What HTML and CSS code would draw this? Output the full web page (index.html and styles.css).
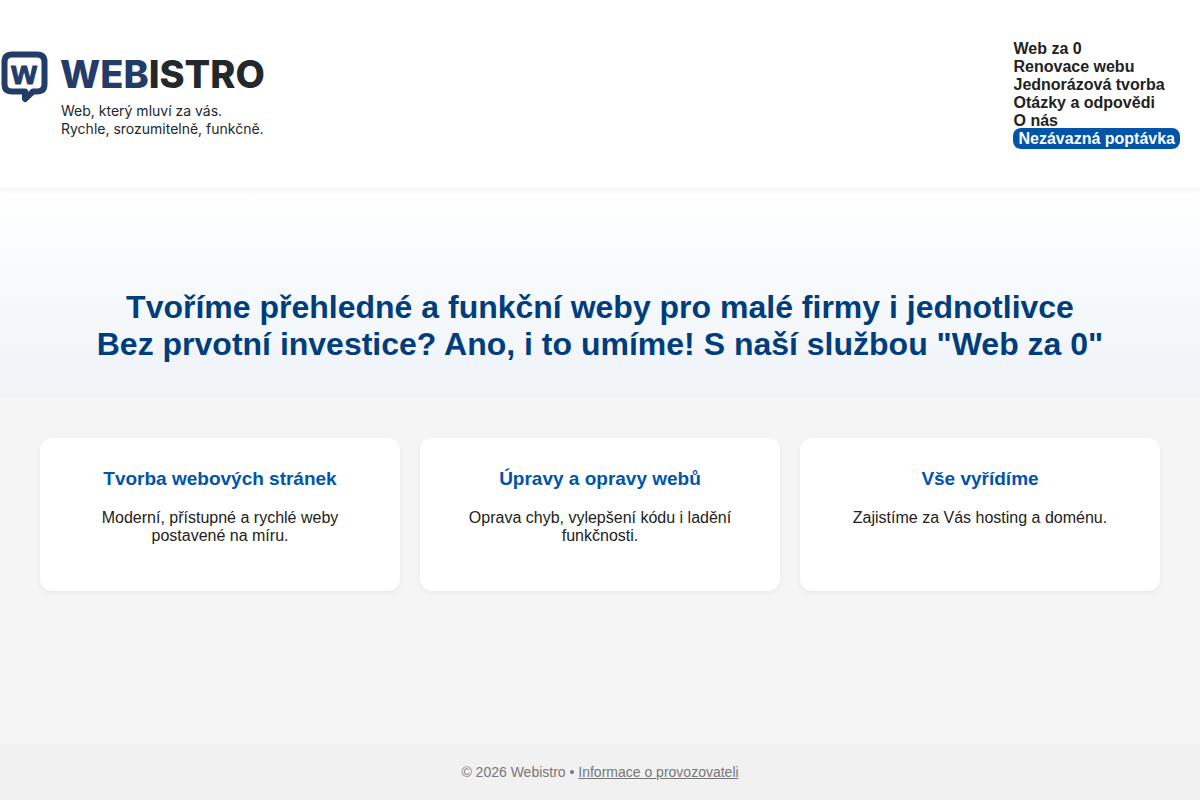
FILE: index.html
```html
<!DOCTYPE html>
<html lang="cs">
  <head>
    <meta charset="UTF-8" />
    <meta name="viewport" content="width=device-width, initial-scale=1.0" />
    <title>Webistro</title>
    <link rel="stylesheet" href="styles.css">
  </head>
  <body>
    <header>
      <a href="#" class="logo">
        <svg class="logo-mark" width="48" height="54" viewBox="0 0 48 54" aria-hidden="true">
          <path class="bubble" d="M12 4.500h25q7.500 0 7.500 7.500v22q0 7.500-7.500 7.500h-4l-8 7.500v-7.500H12q-7.500 0-7.500-7.500V12q0-7.500 7.500-7.500z" />
          <text class="letter" x="24" y="34" text-anchor="middle">w</text>
        </svg>
        <span class="logo-text">
          <span class="logo-name"><span class="logo-web">WEB</span>ISTRO</span>
          <span class="logo-claim">Web, který mluví za vás.<br />Rychle, srozumitelně, funkčně.</span>
        </span>
      </a>
      <nav>
        <ul>
          <li><a href="#">Web za 0</a></li>
          <li><a href="#">Renovace webu</a></li>
          <li><a href="#">Jednorázová tvorba</a></li>
          <li><a href="#">Otázky a odpovědi</a></li>
          <li><a href="#">O nás</a></li>
          <li><a href="#" class="cta">Nezávazná poptávka</a></li>
        </ul>
      </nav>
    </header>

    <section class="hero">
      <h1>
        Tvoříme přehledné a funkční weby pro malé firmy i jednotlivce<br />
        Bez prvotní investice? Ano, i to umíme! S naší službou "Web za 0"
      </h1>
    </section>

    <main class="services">
      <div class="card">
        <h2>Tvorba webových stránek</h2>
        <p>Moderní, přístupné a rychlé weby postavené na míru.</p>
      </div>
      <div class="card">
        <h2>Úpravy a opravy webů</h2>
        <p>Oprava chyb, vylepšení kódu i ladění funkčnosti.</p>
      </div>
      <div class="card">
        <h2>Vše vyřídíme</h2>
        <p>Zajistíme za Vás hosting a doménu.</p>
      </div>
    </main>

    <footer>
      © 2026 Webistro • <a href="#">Informace o provozovateli</a>
    </footer>
  </body>
</html>
```
FILE: styles.css
```css
* {
  box-sizing: border-box;
}
body {
  margin: 0;
  min-height: 100vh;
  display: flex;
  flex-direction: column;
  font-family: "Liberation Sans", Arial, sans-serif;
  font-size: 16px;
  line-height: 18px;
  color: #222;
  background: #f5f5f5;
}

/* header */
header {
  display: flex;
  justify-content: space-between;
  align-items: center;
  padding: 40px 20px 40px 0;
  background: #fff;
  box-shadow: 0 2px 5px rgba(0, 0, 0, 0.05);
  position: relative;
}
.logo {
  display: flex;
  gap: 12px;
  color: #22282c;
  text-decoration: none;
}
.bubble {
  fill: none;
  stroke: #233c69;
  stroke-width: 6;
  stroke-linejoin: round;
}
.letter {
  fill: #233c69;
  stroke: #233c69;
  stroke-width: 1;
  stroke-linejoin: round;
  font-family: "Liberation Sans", Arial, sans-serif;
  font-size: 33px;
  font-weight: bold;
}
.logo-text {
  display: flex;
  flex-direction: column;
  gap: 4px;
}
.logo-name {
  font-family: Inter, sans-serif;
  font-size: 38px;
  font-weight: 800;
  line-height: 48px;
}
.logo-web {
  color: #233c69;
}
.logo-claim {
  padding-left: 1px;
  font-family: Inter, sans-serif;
  font-size: 14px;
  line-height: 18px;
}
nav ul {
  list-style: none;
  margin: 0;
  padding: 0;
}
nav a {
  color: #222;
  font-weight: bold;
  text-decoration: none;
}
nav .cta {
  padding: 2px 5px;
  border-radius: 8px;
  background: #0055aa;
  color: #fff;
}

/* hero */
.hero {
  padding: 101px 20px 35px;
  text-align: center;
  background: linear-gradient(to bottom, #fff, #eef3f8);
}
.hero h1 {
  margin: 0;
  font-size: 32px;
  line-height: 37px;
  color: #003d7c;
}

/* cards */
.services {
  flex: 1;
  display: grid;
  grid-template-columns: repeat(3, 1fr);
  align-content: start;
  gap: 20px;
  padding: 40px;
}
.card {
  padding: 30px;
  text-align: center;
  background: #fff;
  border-radius: 12px;
  box-shadow: 0 2px 5px rgba(0, 0, 0, 0.05);
}
.card h2 {
  margin: 0 0 19px;
  font-size: 19px;
  line-height: 22px;
  color: #0055aa;
}
.card p {
  margin: 0 0 16px;
}

footer {
  padding: 20px;
  font-size: 14px;
  line-height: 16px;
  text-align: center;
  color: #777;
  background: #f1f1f1;
}
footer a {
  color: #777;
}
```
